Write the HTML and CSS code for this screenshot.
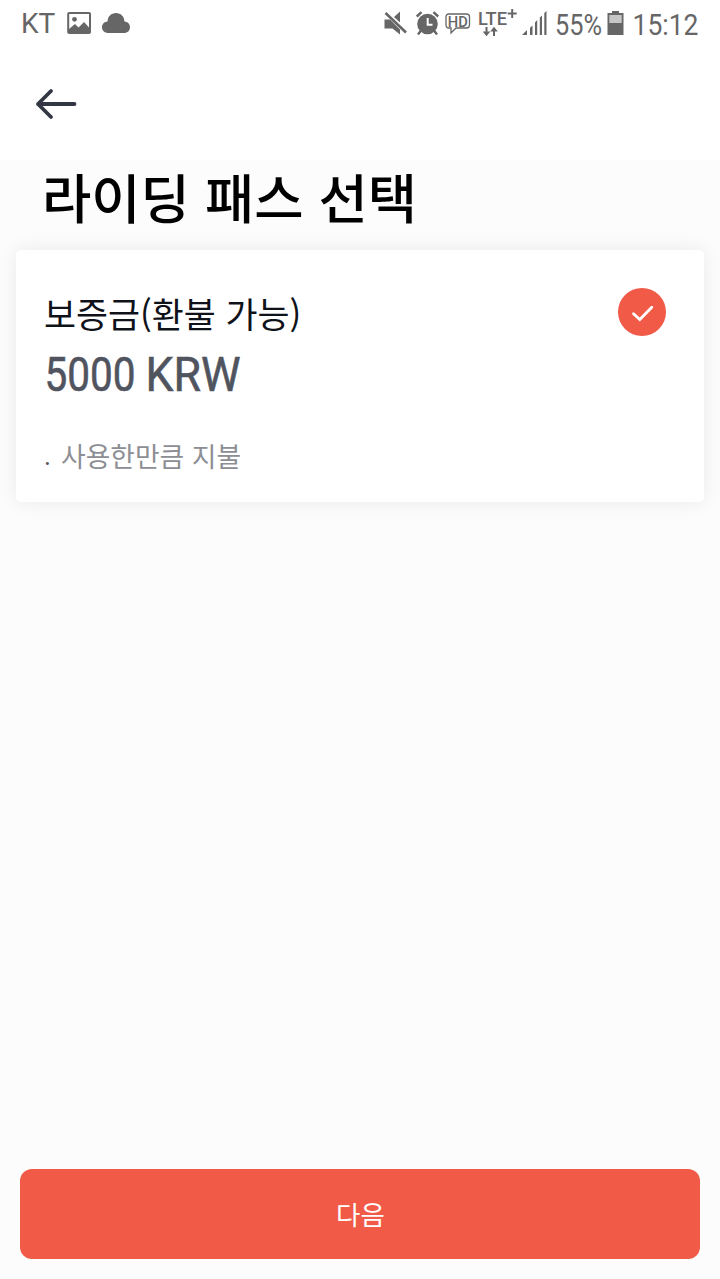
FILE: index.html
```html
<!DOCTYPE html>
<html lang="ko">
  <head>
    <meta charset="UTF-8" />
    <meta name="viewport" content="width=device-width, initial-scale=1.0" />
    <title>라이딩 패스 선택</title>
    <link rel="stylesheet" href="styles.css">
  </head>
  <body>
    <div class="status-bar">
      <div class="status-left">
        <span class="carrier">KT</span>
        <svg class="icon-image" width="24" height="22" viewBox="0 0 24 22">
          <rect x="1.2" y="1" width="21.8" height="20" rx="1" fill="none" stroke="#666" stroke-width="2" />
          <circle cx="7.5" cy="7.3" r="2.4" fill="#666" />
          <path d="M2 17 L8 12 L11.5 15.5 L17 10 L22 15.5 V21 H2 Z" fill="#666" />
        </svg>
        <svg class="icon-cloud" width="28" height="20" viewBox="0 0 28 20">
          <path d="M6 20 C2.5 20 0 17.5 0 14.3 C0 11.1 2.3 8.8 5.6 8.5 C5.6 3.5 9.3 0 14 0 C18.8 0 22.3 3.5 22.5 8.5 C25.7 8.7 28 11 28 14.2 C28 17.5 25.5 20 22 20 Z" fill="#666" />
        </svg>
      </div>

      <div class="status-right">
        <svg class="icon-mute" width="24" height="24" viewBox="0 0 24 24">
          <path d="M0.5 8.5 H6 L16 18.5 V23.5 L8.5 17.5 H0.5 Z M10 6 L16 0.5 V11.5 Z" fill="#666" />
          <path d="M1.5 2 L22 21.5" stroke="#666" stroke-width="2.6" />
        </svg>
        <svg class="icon-alarm" width="24" height="24" viewBox="0 0 24 24">
          <circle cx="11.5" cy="13" r="10.3" fill="#666" />
          <path d="M0.8 5.5 L5.5 1.2 M17.5 1.2 L22.2 5.5 M5 19.5 L2 23.5 M18 19.5 L21 23.5" stroke="#666" stroke-width="2.4" />
          <path d="M11.7 7 V13.8 H16.5" fill="none" stroke="#fff" stroke-width="2" />
        </svg>
        <svg class="icon-hd" width="26" height="23" viewBox="0 0 26 23">
          <path d="M4 1 H21.5 Q24.5 1 24.5 4 V12 Q24.5 15 21.5 15 H11 L6 20 V15 H4 Q1 15 1 12 V4 Q1 1 4 1 Z" fill="none" stroke="#666" stroke-width="1.3" />
          <text x="2.8" y="13.7" textLength="20" lengthAdjust="spacingAndGlyphs" class="hd-text">HD</text>
        </svg>
        <svg class="icon-lte" width="40" height="32" viewBox="0 0 40 32">
          <text x="0" y="20" textLength="29" lengthAdjust="spacingAndGlyphs" class="lte-text">LTE</text>
          <path d="M34.2 4 V13 M29.7 8.5 H38.7" stroke="#666" stroke-width="2" />
          <path d="M8.5 22 V29 M16 31 V23.5" stroke="#666" stroke-width="2" />
          <path d="M4.7 26.5 H12.3 L8.5 31.2 Z M12.2 26.5 H19.8 L16 21.8 Z" fill="#666" />
        </svg>
        <svg class="icon-signal" width="25" height="24" viewBox="0 0 25 24">
          <path d="M0 24 L5 19 V24 Z M8 24 V16.8 L10.5 14.5 V24 Z M13 24 V11.5 L15.2 9 V24 Z M17.8 24 V6.5 L20 4.5 V24 Z M22.3 24 V2 L24.5 0 V24 Z" fill="#666" />
        </svg>
        <svg class="battery-level" width="60" height="40" viewBox="0 0 60 40">
          <text x="0" y="30" textLength="47" lengthAdjust="spacingAndGlyphs" class="status-text">55%</text>
        </svg>
        <svg class="icon-battery" width="17" height="24" viewBox="0 0 17 24">
          <path d="M0.5 2 H5 V0 H12 V2 H16.5 V24 H0.5 Z" fill="#666" />
          <rect x="2.3" y="4" width="12.4" height="8" fill="#c6c6c6" />
        </svg>
        <svg class="clock" width="80" height="40" viewBox="0 0 80 40">
          <text x="0.5" y="30" textLength="66" lengthAdjust="spacingAndGlyphs" class="status-text">15:12</text>
        </svg>
      </div>
    </div>

    <header class="app-bar">
      <svg width="42" height="32" viewBox="0 0 42 32">
        <path d="M39.5 16 H3 M16 3 L3 16 L16 29" fill="none" stroke="#323743" stroke-width="3.8" stroke-linecap="round" stroke-linejoin="round" />
      </svg>
    </header>

    <main class="content">
      <h1>라이딩 패스 선택</h1>

      <section class="pass-card">
        <div class="pass-info">
          <h2>보증금(환불 가능)</h2>
          <svg class="price" width="210" height="62" viewBox="0 0 210 62">
            <text x="-0.5" y="46" textLength="91" lengthAdjust="spacingAndGlyphs" class="price-text">5000</text>
            <text x="100.5" y="46" textLength="95" lengthAdjust="spacingAndGlyphs" class="price-text">KRW</text>
          </svg>
          <p class="pass-note"><span class="dot">.</span>사용한만큼 지불</p>
        </div>
        <svg class="check" width="48" height="48" viewBox="0 0 48 48">
          <circle cx="24" cy="24" r="24" fill="#f15a47" />
          <path d="M15.5 25.8 L21.8 31.5 L33.8 19.3" fill="none" stroke="#fff" stroke-width="2.8" stroke-linecap="round" />
        </svg>
      </section>

      <button class="next-button">다음</button>
    </main>
  </body>
</html>
```
FILE: styles.css
```css
:root {
  --red-primary: #f15a47;
  --page-bg: #fcfcfc;
  --white: #ffffff;
  --dark-text: #10121a;
  --price-text: #50545e;
  --note-text: #8d8e94;
  --status-text: #666666;
}

* {
  margin: 0;
  padding: 0;
  box-sizing: border-box;
  font-family: Roboto, "Noto Sans CJK KR", sans-serif;
}

body {
  height: 100vh;
  display: flex;
  flex-direction: column;
  background-color: var(--page-bg);
  color: var(--dark-text);
  overflow: hidden;
}

svg {
  display: block;
  flex: none;
}

.status-bar {
  display: flex;
  justify-content: space-between;
  height: 48px;
  padding: 0 8px 0 21px;
  background-color: var(--white);
}

.status-left,
.status-right {
  display: flex;
  align-items: flex-start;
}

.carrier {
  width: 46px;
  padding-top: 7px;
  font-size: 28px;
  line-height: 33px;
  color: var(--status-text);
}

.icon-image {
  margin-top: 12px;
}

.icon-cloud {
  margin: 13px 0 0 11px;
}

.icon-mute {
  margin: 11px 8px 0 0;
}

.icon-alarm {
  margin: 11px 5px 0 0;
}

.icon-hd {
  margin: 13px 7px 0 0;
}

.icon-lte {
  margin: 5px 4px 0 0;
}

.icon-signal {
  margin: 11px 8px 0 0;
}

.battery-level {
  margin: 5px -8px 0 0;
}

.icon-battery {
  margin: 11px 8px 0 0;
}

.clock {
  margin-top: 5px;
}

.status-text {
  font-size: 30px;
  fill: var(--status-text);
}

.hd-text {
  font-size: 15.5px;
  font-weight: 500;
  fill: var(--status-text);
}

.lte-text {
  font-size: 18px;
  font-weight: 500;
  fill: var(--status-text);
}

.app-bar {
  height: 112px;
  padding: 40px 35px;
  background-color: var(--white);
}

.content {
  flex: 1;
  display: flex;
  flex-direction: column;
  padding-bottom: 20px;
}

h1 {
  padding: 0 42px 19px;
  font-family: "Noto Sans CJK KR", sans-serif;
  font-size: 53.6px;
  font-weight: 500;
  line-height: 71px;
  color: #000000;
}

.pass-card {
  display: flex;
  justify-content: space-between;
  height: 252px;
  margin: 0 16px;
  padding: 38px 38px 0 28px;
  background-color: var(--white);
  border-radius: 5px;
  box-shadow: 0 0 20px rgba(0, 0, 0, 0.08);
}

h2 {
  font-family: "Noto Sans CJK KR", sans-serif;
  font-size: 34.8px;
  font-weight: 400;
  line-height: 50px;
}

.price {
  margin: 7px 0 0 1px;
}

.price-text {
  font-size: 48px;
  font-weight: 400;
  fill: var(--price-text);
  stroke: var(--price-text);
  stroke-width: 0.6px;
}

.pass-note {
  display: flex;
  margin-top: 29px;
  font-family: "Noto Sans CJK KR", sans-serif;
  font-size: 26.8px;
  line-height: 40px;
  color: var(--note-text);
}

.dot {
  width: 17px;
  color: #55565c;
}

.next-button {
  height: 90px;
  margin: auto 20px 0;
  padding: 0 0 1px 1px;
  border: none;
  border-radius: 12px;
  background-color: var(--red-primary);
  color: var(--white);
  font-family: "Noto Sans CJK KR", sans-serif;
  font-size: 26.5px;
  cursor: pointer;
}
```
